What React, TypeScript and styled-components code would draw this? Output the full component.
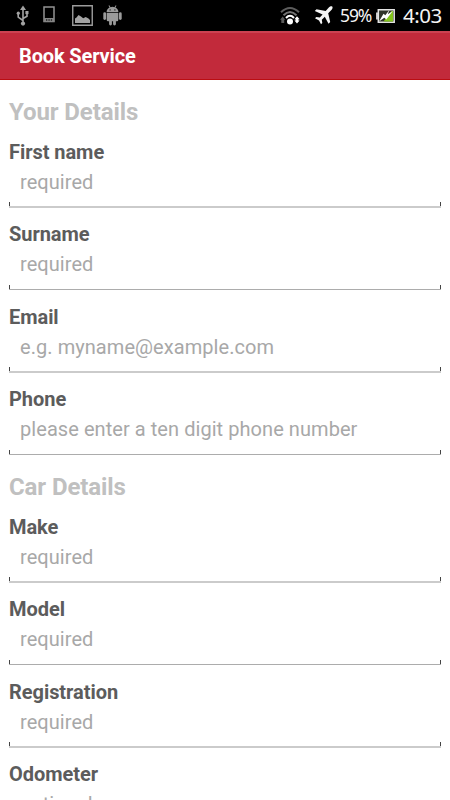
import React from "react";
import styled, { createGlobalStyle } from "styled-components";

const GlobalStyle = createGlobalStyle`
  *, *::before, *::after { box-sizing: border-box; }
  body { margin: 0; background: #fff; font-family: Roboto, "Liberation Sans", sans-serif; }
`;

const Screen = styled.div`
  display: flex;
  flex-direction: column;
  width: 450px;
  height: 800px;
  overflow: hidden;
  background: #fff;
`;

const StatusBar = styled.div`
  flex: none;
  display: flex;
  justify-content: space-between;
  height: 31px;
  background: #000;
`;

const StatusGroup = styled.div`
  display: flex;
  align-items: center;
  height: 31px;
`;

const StatusIcon = styled.svg<{ $gap: number }>`
  flex: none;
  display: block;
  margin-left: ${(p) => p.$gap}px;
`;

const StatusText = styled.span<{ $size: number; $gap: number; $width: number; $spacing: number }>`
  flex: none;
  width: ${(p) => p.$width}px;
  margin-left: ${(p) => p.$gap}px;
  font-family: "Noto Sans", "Open Sans", sans-serif;
  font-size: ${(p) => p.$size}px;
  letter-spacing: ${(p) => p.$spacing}px;
  line-height: 31px;
  white-space: nowrap;
  color: #f5f5f5;
`;

const TitleBar = styled.header`
  flex: none;
  display: flex;
  align-items: center;
  height: 49px;
  padding: 0 19px;
  background: #c22a3b;
  border-top: 2px solid #cc4252;
  border-bottom: 1px solid #bb0d12;
`;

const Title = styled.h1`
  margin: 0;
  font-size: 20px;
  font-weight: 700;
  line-height: 24px;
  letter-spacing: -0.13px;
  color: #fff;
`;

const Form = styled.main`
  padding: 13.5px 9px 0;
`;

const SectionTitle = styled.h2`
  height: 45px;
  margin: 0;
  font-size: 24px;
  font-weight: 700;
  line-height: 36px;
  letter-spacing: -0.1px;
  color: #c0c0c0;
`;

const Label = styled.div`
  height: 27px;
  font-size: 20px;
  font-weight: 700;
  line-height: 27px;
  letter-spacing: -0.05px;
  color: #5c5c5c;
`;

const Entry = styled.div`
  height: 42px;
  padding-left: 11px;
  font-size: 20px;
  line-height: 33px;
  letter-spacing: 0.06px;
  white-space: nowrap;
  color: #a8a8a8;
  border-bottom: 2px solid #cbcbcb;
  background:
    linear-gradient(#444, #444) left bottom / 1px 4px no-repeat,
    linear-gradient(#444, #444) right bottom / 1px 4px no-repeat;
`;

const Field = styled.div`
  height: 82.5px;

  &:nth-of-type(even) ${Entry} {
    border-bottom: 1px solid #acacac;
  }
`;

const sections = [
  {
    title: "Your Details",
    fields: [
      ["First name", "required"],
      ["Surname", "required"],
      ["Email", "e.g. myname@example.com"],
      ["Phone", "please enter a ten digit phone number"],
    ],
  },
  {
    title: "Car Details",
    fields: [
      ["Make", "required"],
      ["Model", "required"],
      ["Registration", "required"],
      ["Odometer", "optional"],
    ],
  },
];

const UsbIcon = () => (
  <StatusIcon $gap={16} width="13" height="22" viewBox="0 0 13 22" fill="none" stroke="#a3a3a3" strokeWidth="1.6">
    <path d="M7 4v14M2.2 9v3.2L7 15.5M11 8v3.2L7 13.5" />
    <path d="M7 .5 10 5H4z" fill="#a3a3a3" stroke="none" />
    <circle cx="7" cy="18.6" r="2.1" fill="#a3a3a3" stroke="none" />
    <circle cx="2.3" cy="8.2" r="1.6" fill="#a3a3a3" stroke="none" />
    <path d="M9.4 6h3.1v3.1H9.4z" fill="#a3a3a3" stroke="none" />
  </StatusIcon>
);

const PhoneIcon = () => (
  <StatusIcon $gap={14} width="12" height="20" viewBox="0 0 12 20">
    <path d="M1 1h10v14.5H1z" fill="none" stroke="#929292" strokeWidth="1.5" />
    <path d="M1 12h10v4H1z" fill="#858585" />
    <path d="M3 14h1.3M5.4 14h1.3M7.8 14h1.3" stroke="#222" strokeWidth="1.3" />
  </StatusIcon>
);

const PictureIcon = () => (
  <StatusIcon $gap={17} width="21" height="21" viewBox="0 0 21 21">
    <path d="M.75.75h19.5v19.5H.75z" fill="none" stroke="#9c9c9c" strokeWidth="1.4" />
    <path d="M3 18v-4.5l1.5-1 2-2.5 2.5 1.5 2.2 1.8 2.5-1.3 2.8 1.5 1.5 1.5V18z" fill="#a3a3a3" />
  </StatusIcon>
);

const AndroidIcon = () => (
  <StatusIcon $gap={10} width="19" height="21" viewBox="0 0 19 21" fill="#9b9b9b">
    <path d="M3.6 7c0-2.1 1.4-3.6 3-4.4L5.500.8l.8-.5 1.200 1.900a6 6 0 0 1 4 0L12.700.3l.8.5-1.100 1.800C14 3.400 15.400 4.900 15.400 7z" />
    <path d="M3.700 7.700h11.600V15a1.300 1.300 0 0 1-1.300 1.300H12.900V19a1.400 1.400 0 0 1-2.800 0v-2.700H8.900V19a1.400 1.400 0 0 1-2.800 0v-2.700H5A1.300 1.300 0 0 1 3.700 15z" />
    <rect x="0.3" y="7.3" width="2.8" height="7.7" rx="1.4" />
    <rect x="15.9" y="7.3" width="2.8" height="7.7" rx="1.4" />
    <circle cx="7.1" cy="4.9" r=".6" fill="#000" />
    <circle cx="11.9" cy="4.9" r=".6" fill="#000" />
  </StatusIcon>
);

const WifiIcon = () => (
  <StatusIcon $gap={0} width="20" height="20" viewBox="0 0 20 20" fill="none">
    <path d="M1 6.300Q10-2.300 19 6.300" stroke="#5d5d5d" strokeWidth="2" />
    <path d="M3.500 9.200Q10 2.800 16.500 9.200" stroke="#747474" strokeWidth="2" />
    <path d="M6 12Q10 7.700 14 12" stroke="#fff" strokeWidth="2" />
    <circle cx="10" cy="15.600" r="3" fill="#fff" />
    <path d="m2.700 10.500 2.600 3.200H4.200V17H1.300v-3.300H.1z" fill="#5a5a5a" />
    <path d="m17 10.300 2.600 3h-1.200v1.200h1.200l-2.600 3-2.600-3h1.200v-1.200h-1.200z" fill="#fff" />
  </StatusIcon>
);

const PlaneIcon = () => (
  <StatusIcon $gap={14} width="19" height="19" viewBox="0 0 19 19">
    <path d="M18.200.5c.8.8.2 2.400-.8 3.500l-3.200 3.200 2 8.800-1.700 1.700-3.700-7-3 3 .5 3.300-1.300 1.300-2-3.800L1 12.300 2.300 11l3.500.4 2.800-2.900L.8 5l1.700-1.700 9.200 1.600L14.800 1.500c1-1 2.600-1.700 3.400-1z" fill="#f5f5f5" />
  </StatusIcon>
);

const BatteryIcon = () => (
  <StatusIcon $gap={5} width="19" height="16" viewBox="0 0 19 16">
    <path d="M0 4.500h2.500v7H0z" fill="#c8c8c8" />
    <path d="M2.300 1.800h15.900v12.400H2.300z" fill="#30342a" stroke="#e3e3e3" strokeWidth="1.5" />
    <path d="M15.500 3H17v10.500H7.500z" fill="#83c51c" />
    <path d="m13.500 1.800-4.200 5.500-1.800-1.500L3 13.500 8.300 9.700l2 1.900 6.500-8.500-5 3.200z" fill="#fff" />
  </StatusIcon>
);

export default function App() {
  return (
    <>
      <GlobalStyle />
      <Screen>
        <StatusBar>
          <StatusGroup>
            <UsbIcon />
            <PhoneIcon />
            <PictureIcon />
            <AndroidIcon />
          </StatusGroup>
          <StatusGroup>
            <WifiIcon />
            <PlaneIcon />
            <StatusText $size={17.5} $gap={7} $width={31} $spacing={-1.1}>59%</StatusText>
            <BatteryIcon />
            <StatusText $size={20.5} $gap={8} $width={47} $spacing={-0.5}>4:03</StatusText>
          </StatusGroup>
        </StatusBar>
        <TitleBar>
          <Title>Book Service</Title>
        </TitleBar>
        <Form>
          {sections.map((section) => (
            <section key={section.title}>
              <SectionTitle>{section.title}</SectionTitle>
              {section.fields.map(([label, hint]) => (
                <Field key={label}>
                  <Label>{label}</Label>
                  <Entry>{hint}</Entry>
                </Field>
              ))}
            </section>
          ))}
        </Form>
      </Screen>
    </>
  );
}
